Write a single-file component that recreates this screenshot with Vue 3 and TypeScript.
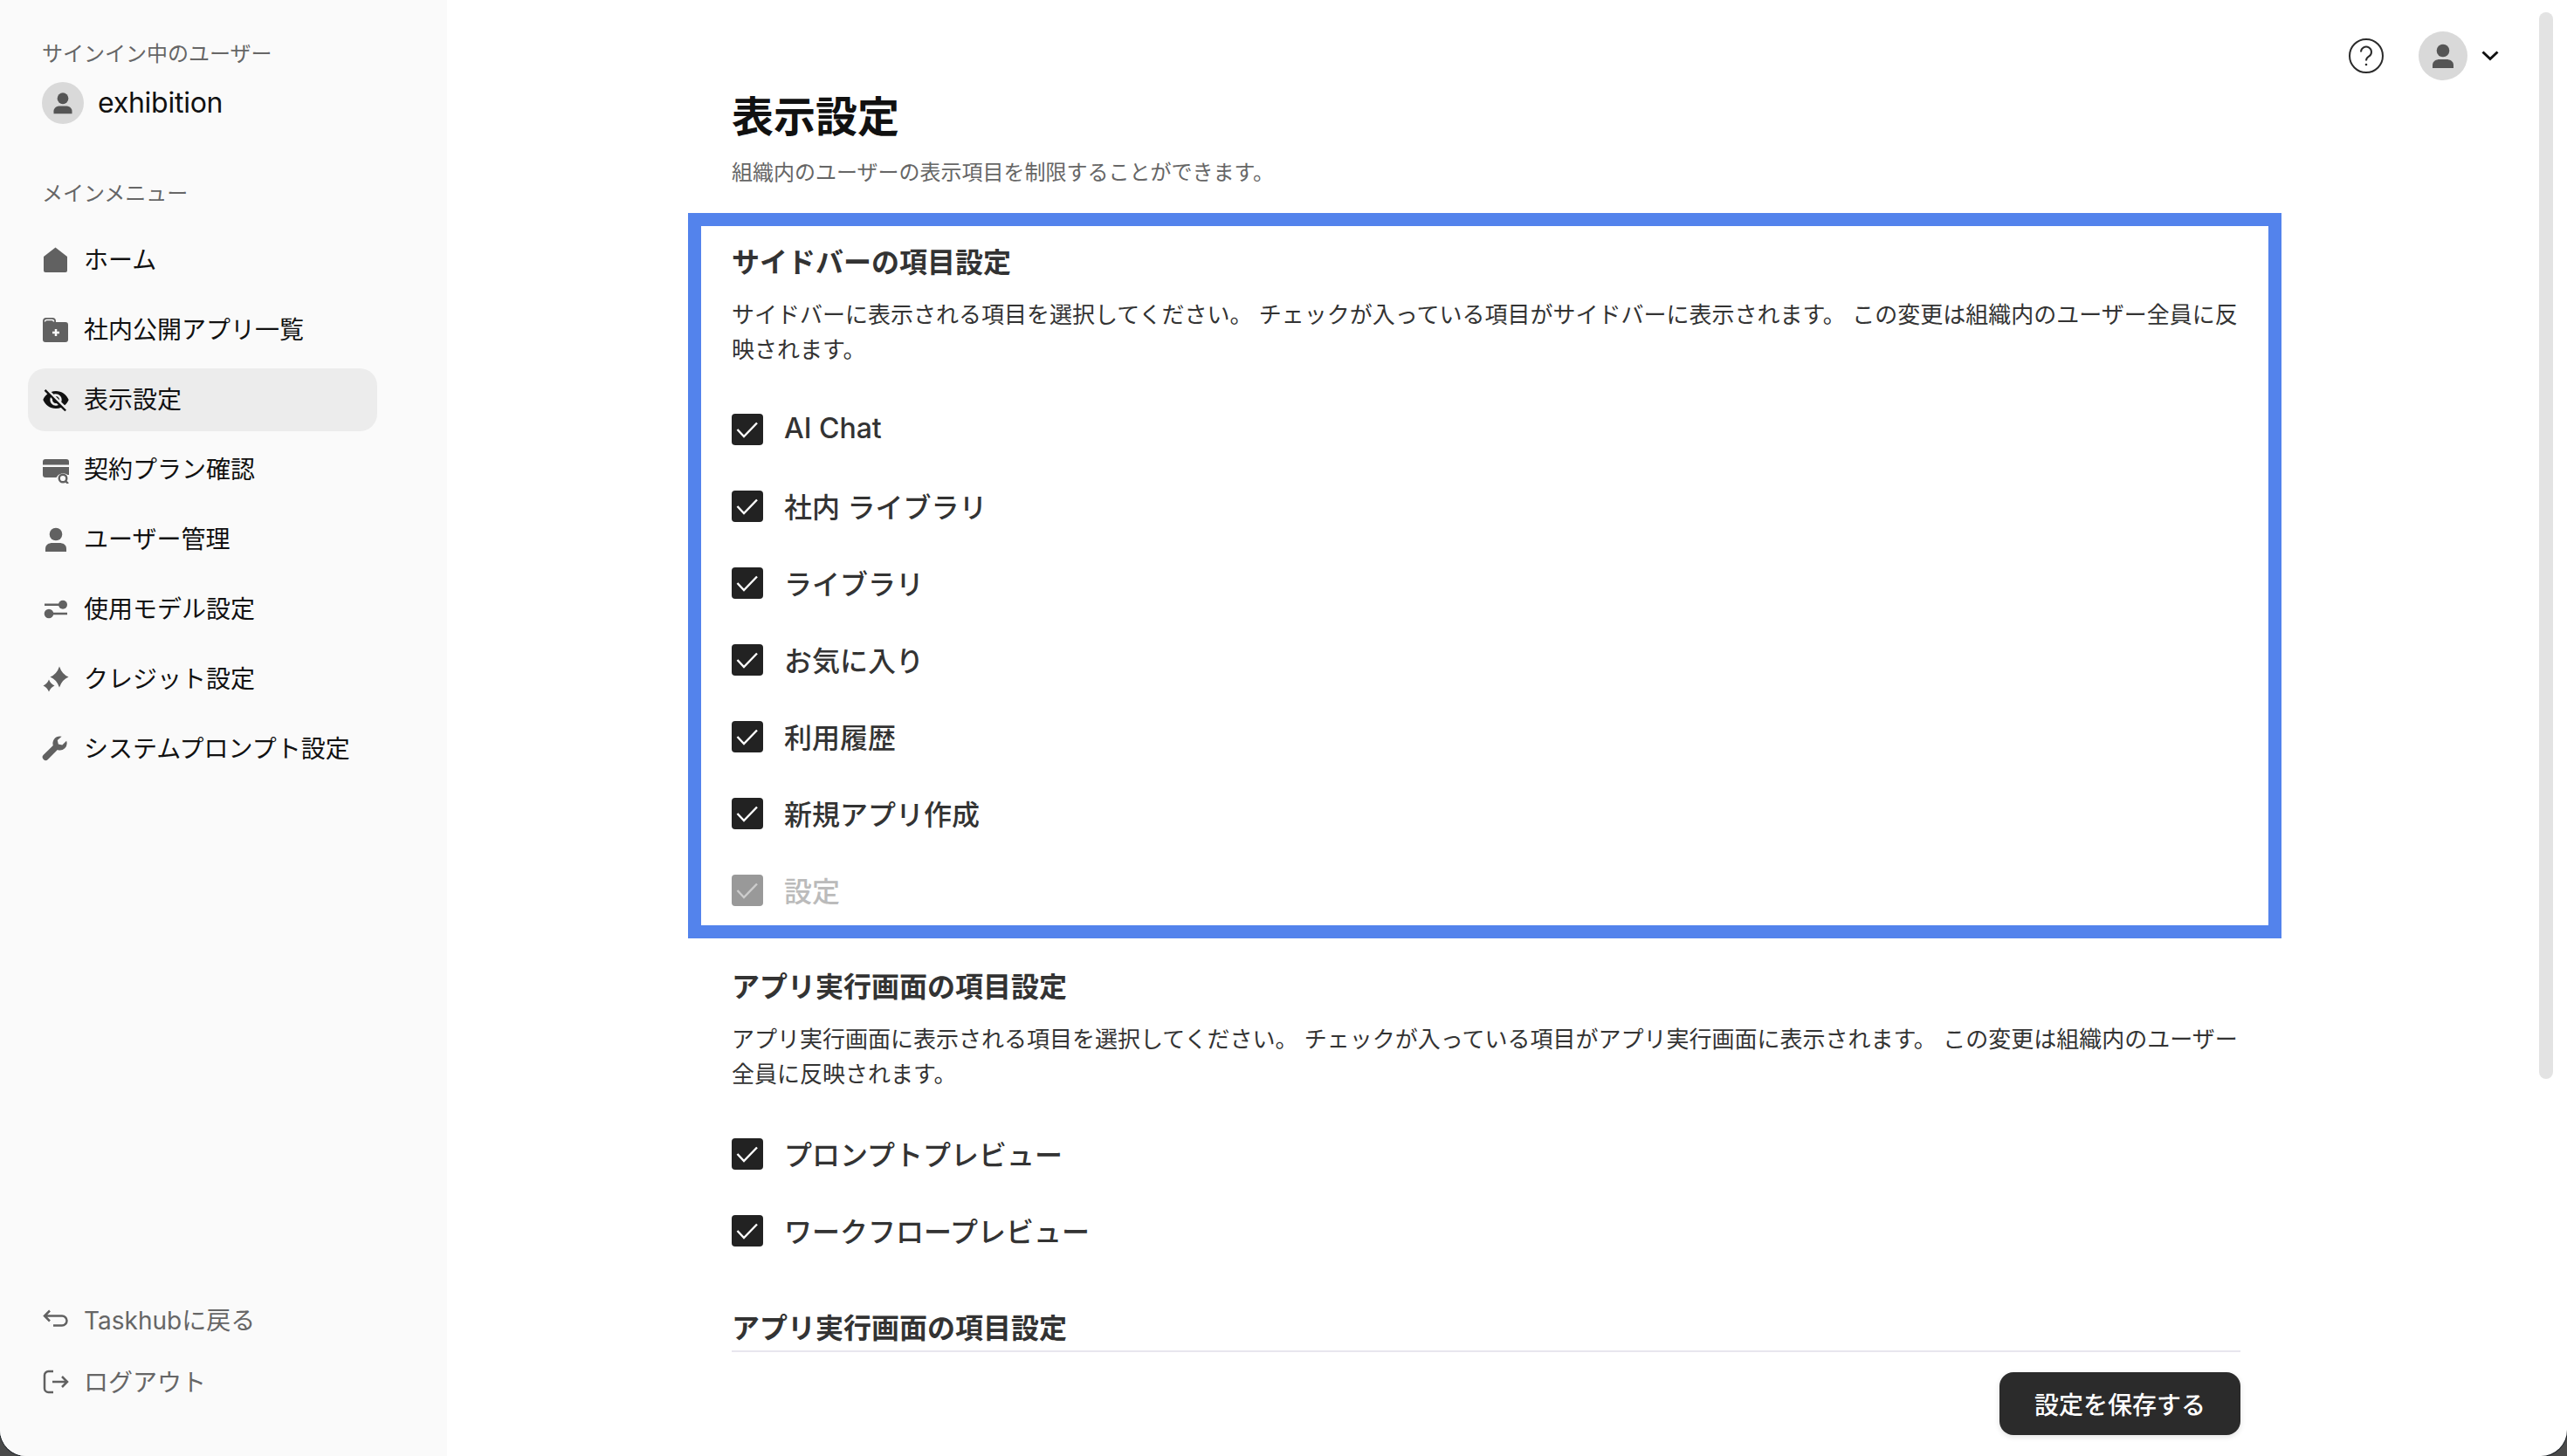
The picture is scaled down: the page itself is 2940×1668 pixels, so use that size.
<script setup lang="ts">
interface NavItem {
  icon: string
  label: string
  active?: boolean
}
interface CheckItem {
  label: string
  disabled?: boolean
}

const navItems: NavItem[] = [
  { icon: 'home', label: 'ホーム' },
  { icon: 'folder', label: '社内公開アプリ一覧' },
  { icon: 'eye', label: '表示設定', active: true },
  { icon: 'card', label: '契約プラン確認' },
  { icon: 'user', label: 'ユーザー管理' },
  { icon: 'sliders', label: '使用モデル設定' },
  { icon: 'spark', label: 'クレジット設定' },
  { icon: 'wrench', label: 'システムプロンプト設定' }
]

const sidebarChecks: CheckItem[] = [
  { label: 'AI Chat' },
  { label: '社内 ライブラリ' },
  { label: 'ライブラリ' },
  { label: 'お気に入り' },
  { label: '利用履歴' },
  { label: '新規アプリ作成' },
  { label: '設定', disabled: true }
]

const appChecks: CheckItem[] = [
  { label: 'プロンプトプレビュー' },
  { label: 'ワークフロープレビュー' }
]
</script>

<template>
  <div class="window">
    <aside class="sidebar">
      <div class="side-top">
        <div class="side-caption">サインイン中のユーザー</div>
        <div class="me">
          <span class="avatar avatar-small">
            <svg width="28" height="28" viewBox="0 0 32 32" fill="#555">
              <circle cx="16" cy="10" r="7.3" />
              <path d="M4 30v-3.500C4 22 8.500 20 12 20h8c3.500 0 8 2 8 6.500V30z" />
            </svg>
          </span>
          <span class="me-name">exhibition</span>
        </div>
        <div class="side-caption menu-caption">メインメニュー</div>
        <nav class="nav">
          <div v-for="item in navItems" :key="item.label" class="nav-item" :class="{ active: item.active }">
            <svg class="nav-icon" width="32" height="32" viewBox="0 0 32 32" :fill="item.active ? '#111' : '#616161'">
              <path v-if="item.icon === 'home'" d="M15.500 1.500L29 12v16a2 2 0 0 1-2 2H4a2 2 0 0 1-2-2V12z" />
              <template v-else-if="item.icon === 'folder'">
                <path d="M1 6a4 4 0 0 1 4-4h7a4 4 0 0 1 4 4v1h11a3 3 0 0 1 3 3v17a3 3 0 0 1-3 3H4a3 3 0 0 1-3-3z" />
                <path d="M3.500 6.500a2 2 0 0 1 2-2h6a2 2 0 0 1 2 2" fill="none" stroke="#fafafa" stroke-width="1.500" />
                <path d="M16 15v8M12 19h8" fill="none" stroke="#fafafa" stroke-width="2.500" />
              </template>
              <g v-else-if="item.icon === 'eye'" transform="scale(1.3333)">
                <path d="M12 7c2.760 0 5 2.240 5 5 0 .650-.130 1.260-.360 1.830l2.920 2.920c1.510-1.260 2.700-2.890 3.430-4.750-1.730-4.390-6-7.500-11-7.500-1.400 0-2.740.250-3.980.700l2.160 2.160C10.740 7.130 11.350 7 12 7zM2 4.270l2.280 2.280.460.460C3.080 8.300 1.780 10.020 1 12c1.730 4.390 6 7.500 11 7.500 1.550 0 3.030-.300 4.380-.840l.420.420L19.730 22 21 20.730 3.270 3 2 4.270zM7.530 9.800l1.550 1.550c-.050.210-.080.430-.080.650 0 1.660 1.340 3 3 3 .220 0 .440-.030.650-.080l1.550 1.550c-.670.330-1.410.530-2.200.530-2.760 0-5-2.240-5-5 0-.790.200-1.530.530-2.200zm4.310-.780l3.150 3.150.020-.160c0-1.660-1.340-3-3-3l-.170.010z" />
              </g>
              <template v-else-if="item.icon === 'card'">
                <path d="M1 7a3 3 0 0 1 3-3h24a3 3 0 0 1 3 3v3.500H1z" />
                <path d="M1 13h30v9h-1.500a9 9 0 0 0-13 3H4a3 3 0 0 1-3-3z" />
                <circle cx="24" cy="26" r="4.300" fill="none" stroke="#616161" stroke-width="2.400" />
                <path d="M27 29l3 3" stroke="#616161" stroke-width="2.400" fill="none" />
              </template>
              <template v-else-if="item.icon === 'user'">
                <circle cx="16" cy="10" r="7.300" />
                <path d="M4 30v-3.500C4 22 8 20 12 20h8c4 0 8 2 8 6.500V30z" />
              </template>
              <template v-else-if="item.icon === 'sliders'">
                <path d="M3 10.700h20M12 21h17" stroke="#616161" stroke-width="2.400" fill="none" />
                <circle cx="24" cy="10.700" r="5" />
                <circle cx="8" cy="21" r="5.300" />
              </template>
              <template v-else-if="item.icon === 'spark'">
                <path d="M20 1.500Q23 10.500 30.500 13.500 23 16.500 20 25.500 17 16.500 9.500 13.500 17 10.500 20 1.500z" />
                <path d="M8 16.500Q10 21.500 14.500 23.500 10 25.500 8 30.500 6 25.500 1.500 23.500 6 21.500 8 16.500z" />
              </template>
              <path v-else d="M20.500 1.500a8 8 0 0 0-7.700 10.400L1.800 22.800a3.600 3.600 0 0 0 5.100 5.100l10.900-10.900a8 8 0 0 0 10.300-10.200l-4.800 4.800-4.500-1-1-4.500 4.800-4.300a8 8 0 0 0-2.100-.300z" />
            </svg>
            <span>{{ item.label }}</span>
          </div>
        </nav>
      </div>
      <div class="side-bottom">
        <div class="bottom-link back-link">
          <svg width="32" height="32" viewBox="0 0 32 32" fill="none" stroke="#616161" stroke-width="2.500">
            <path d="M9 6.500L3 12.500l6 6M3 12.500h20a5.500 5.500 0 0 1 0 11H13" />
          </svg>
          <span>Taskhubに戻る</span>
        </div>
        <div class="bottom-link">
          <svg width="32" height="32" viewBox="0 0 32 32" fill="none" stroke="#616161" stroke-width="2.500">
            <path d="M13 5H7.500A4.500 4.500 0 0 0 3 9.500v15A4.500 4.500 0 0 0 7.500 29H13M12 17h17M23 11l6 6-6 6" />
          </svg>
          <span>ログアウト</span>
        </div>
      </div>
    </aside>

    <main class="main">
      <div class="scroll">
        <h1 class="title">表示設定</h1>
        <p class="lead">組織内のユーザーの表示項目を制限することができます。</p>

        <section class="highlight">
          <h2 class="heading">サイドバーの項目設定</h2>
          <p class="desc">サイドバーに表示される項目を選択してください。 チェックが入っている項目がサイドバーに表示されます。 この変更は組織内のユーザー全員に反映されます。</p>
          <div class="checks">
            <label v-for="c in sidebarChecks" :key="c.label" class="check" :class="{ disabled: c.disabled }">
              <span class="box">
                <svg width="36" height="36" viewBox="0 0 36 36" fill="none" stroke-width="2.400">
                  <path d="M6.500 18l7.500 8L29 10.500" />
                </svg>
              </span>
              <span class="check-label">{{ c.label }}</span>
            </label>
          </div>
        </section>

        <section class="plain">
          <h2 class="heading">アプリ実行画面の項目設定</h2>
          <p class="desc">アプリ実行画面に表示される項目を選択してください。 チェックが入っている項目がアプリ実行画面に表示されます。 この変更は組織内のユーザー全員に反映されます。</p>
          <div class="checks">
            <label v-for="c in appChecks" :key="c.label" class="check">
              <span class="box">
                <svg width="36" height="36" viewBox="0 0 36 36" fill="none" stroke-width="2.400">
                  <path d="M6.500 18l7.500 8L29 10.500" />
                </svg>
              </span>
              <span class="check-label">{{ c.label }}</span>
            </label>
          </div>
        </section>

        <section class="plain third">
          <h2 class="heading">アプリ実行画面の項目設定</h2>
        </section>
      </div>

      <footer class="footer">
        <button class="save" type="button">設定を保存する</button>
      </footer>

      <div class="topbar">
        <svg width="40" height="40" viewBox="0 0 40 40" fill="none" stroke="#2b2b2b" stroke-width="2">
          <circle cx="20" cy="20" r="19" />
          <path d="M14 15.500a6 6 0 1 1 9 5.200c-2 1.200-3 2.300-3 4.800" />
          <circle cx="20" cy="30" r="1.300" fill="#2b2b2b" stroke="none" />
        </svg>
        <span class="avatar avatar-large">
          <svg width="32" height="32" viewBox="0 0 32 32" fill="#555">
            <circle cx="16" cy="10" r="7.300" />
            <path d="M4 30v-3.500C4 22 8.500 20 12 20h8c3.500 0 8 2 8 6.500V30z" />
          </svg>
        </span>
        <svg class="chev" width="20" height="12" viewBox="0 0 20 12" fill="none" stroke="#111" stroke-width="3">
          <path d="M1.500 1.500L10 9.500l8.500-8" />
        </svg>
      </div>

      <div class="thumb"></div>
    </main>
  </div>
</template>

<style scoped>
.window {
  display: flex;
  width: 2940px;
  height: 1668px;
  overflow: hidden;
  background: #fff;
  border-radius: 0 0 30px 30px;
  box-shadow: 0 0 0 1px #1b2026;
  font-family: Inter, 'Noto Sans CJK JP', sans-serif;
  color: #111;
}

.sidebar {
  width: 512px;
  flex: none;
  display: flex;
  flex-direction: column;
  justify-content: space-between;
  background: #fafafa;
}
.side-top {
  padding: 44px 0 0 32px;
}
.side-caption {
  padding-left: 16px;
  font-size: 24px;
  line-height: 36px;
  color: #666;
}
.me {
  display: flex;
  align-items: center;
  gap: 16px;
  padding-left: 16px;
  margin-top: 14px;
}
.avatar {
  display: flex;
  align-items: center;
  justify-content: center;
  border-radius: 50%;
  background: #d9d9d9;
  flex: none;
}
.avatar-small {
  width: 48px;
  height: 48px;
}
.avatar-large {
  width: 56px;
  height: 56px;
  margin-left: 40px;
}
.me-name {
  font-size: 32px;
  line-height: 48px;
  letter-spacing: -0.25px;
  color: #111;
}
.menu-caption {
  margin-top: 62px;
}
.nav {
  display: flex;
  flex-direction: column;
  gap: 8px;
  margin-top: 22px;
}
.nav-item {
  display: flex;
  align-items: center;
  gap: 16px;
  width: 400px;
  height: 72px;
  padding: 0 0 4px 16px;
  box-sizing: border-box;
  border-radius: 20px;
  font-size: 28px;
  color: #111;
}
.nav-item.active {
  background: #ececec;
}
.nav-icon {
  flex: none;
  margin-top: 3px;
}
.side-bottom {
  padding: 0 0 66px 48px;
}
.bottom-link {
  display: flex;
  align-items: center;
  gap: 16px;
  height: 40px;
  font-size: 28px;
  color: #666;
}
.back-link {
  margin-bottom: 31px;
}

.main {
  position: relative;
  flex: 1;
  min-width: 0;
  display: flex;
  flex-direction: column;
}
.scroll {
  flex: 1;
  min-height: 0;
  overflow: hidden;
  padding: 98px 0 0 276px;
  box-sizing: border-box;
}
.title {
  margin: 0 0 0 50px;
  font-size: 48px;
  line-height: 72px;
  font-weight: 700;
  color: #111;
}
.lead {
  margin: 10px 0 28px 50px;
  font-size: 24px;
  line-height: 36px;
  color: #666;
}
.highlight {
  width: 1825px;
  box-sizing: border-box;
  padding: 18px 32px 20px 35px;
  border: 15px solid #5383ec;
}
.plain {
  width: 1728px;
  margin: 32px 0 0 50px;
}
.third {
  margin-top: 68px;
}
.heading {
  margin: 0;
  font-size: 32px;
  line-height: 48px;
  font-weight: 700;
  color: #333;
}
.desc {
  margin: 16px 0 0;
  font-size: 26px;
  line-height: 40px;
  color: #333;
}
.checks {
  display: flex;
  flex-direction: column;
  gap: 48px;
  margin-top: 51px;
}
.check {
  display: flex;
  align-items: center;
  gap: 24px;
  height: 40px;
  font-size: 32px;
  font-weight: 500;
  color: #333;
}
.check-label {
  padding-bottom: 3px;
}
.box {
  display: block;
  width: 36px;
  height: 36px;
  flex: none;
  border-radius: 4px;
  background: #222;
  stroke: #fff;
}
.check.disabled {
  color: #bbb;
}
.check.disabled .box {
  background: #999;
  stroke: #ccc;
}

.footer {
  flex: none;
  display: flex;
  justify-content: flex-end;
  width: 1728px;
  height: 121px;
  margin-left: 326px;
  padding-top: 23px;
  box-sizing: border-box;
  border-top: 2px solid #e8e6ee;
}
.save {
  width: 276px;
  height: 72px;
  border: none;
  border-radius: 16px;
  background: #2b2b2b;
  box-shadow: 0 2px 6px rgba(0, 0, 0, 0.12);
  color: #fff;
  font: 500 28px Inter, 'Noto Sans CJK JP', sans-serif;
}

.topbar {
  position: absolute;
  top: 36px;
  right: 78px;
  display: flex;
  align-items: center;
}
.chev {
  margin-left: 16px;
}
.thumb {
  position: absolute;
  top: 14px;
  right: 16px;
  width: 16px;
  height: 1222px;
  border-radius: 8px;
  background: #e3e3e3;
}
</style>

<style>
html,
body {
  margin: 0;
  overflow: hidden;
  background: #4a4a4a;
}
</style>
